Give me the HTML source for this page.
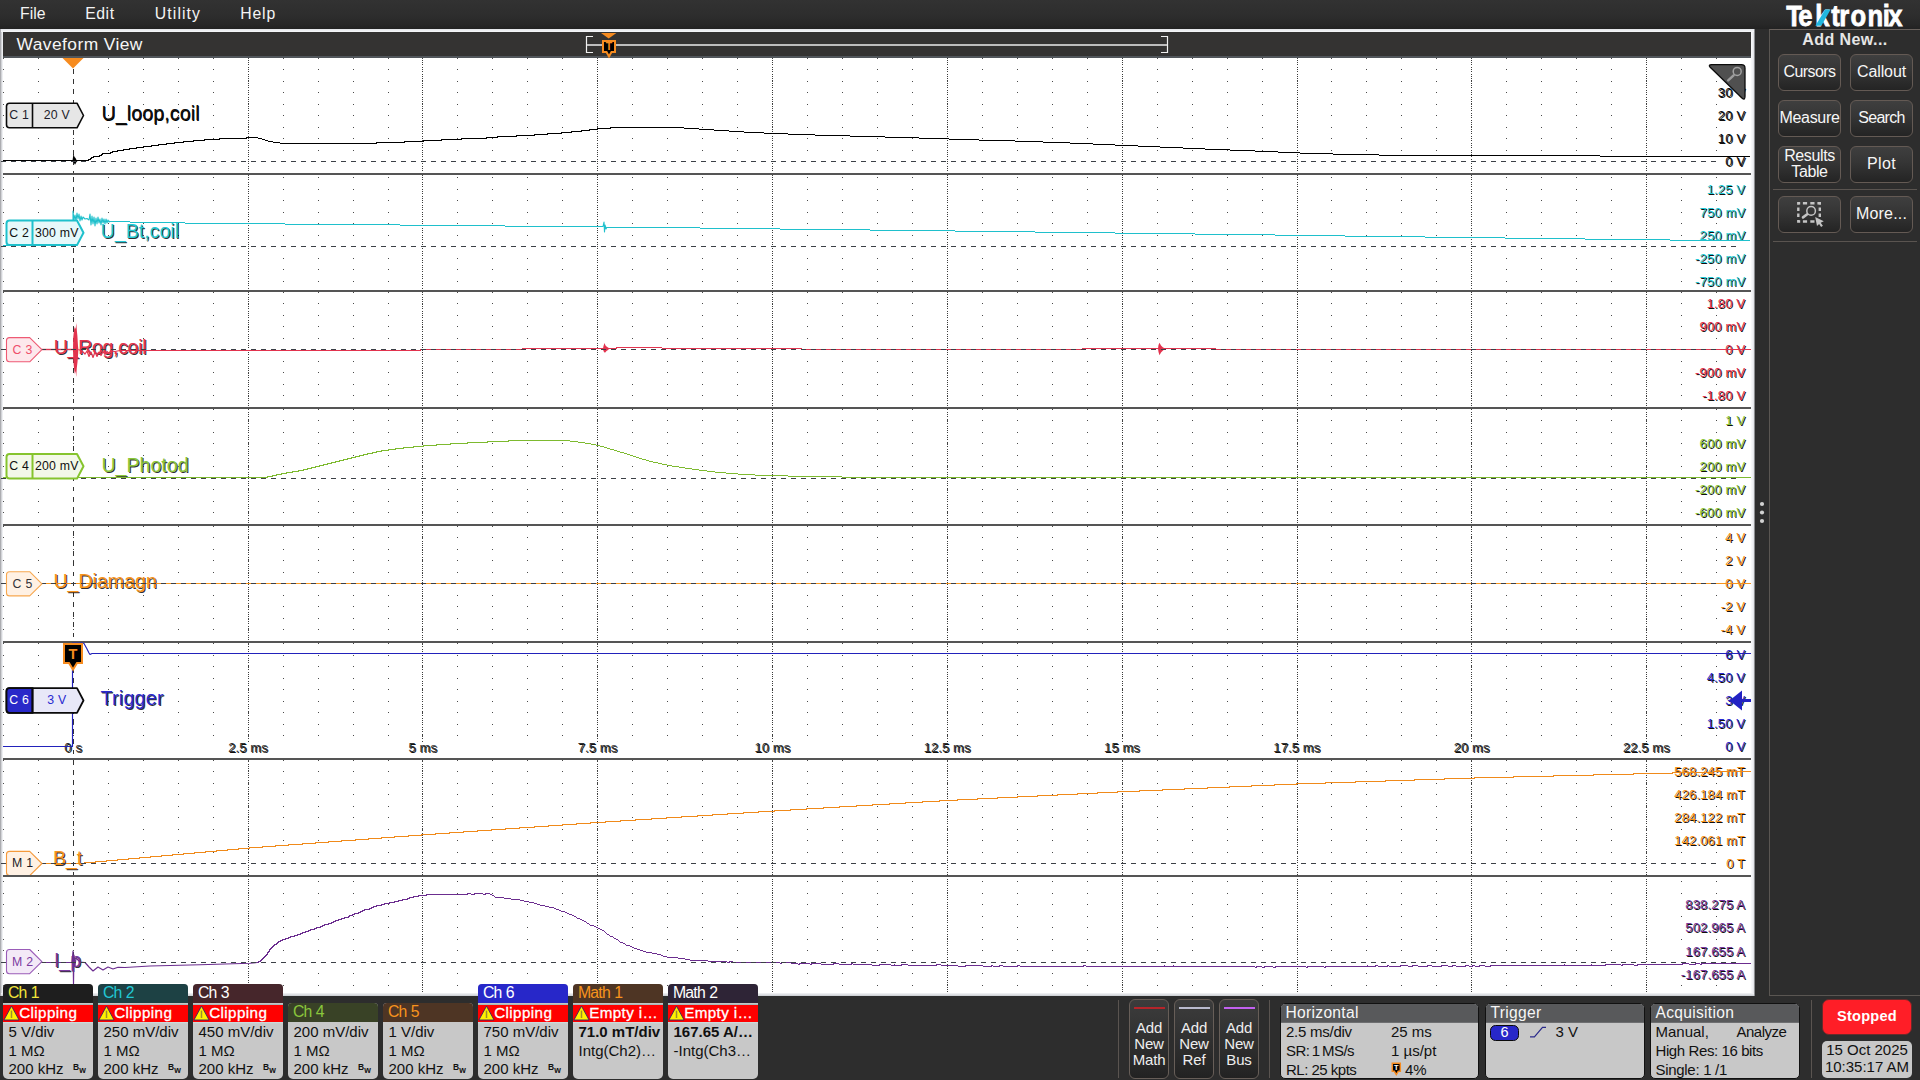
<!DOCTYPE html>
<html lang="en">
<head>
<meta charset="utf-8">
<title>Waveform View</title>
<style>
html,body{margin:0;padding:0}
body{width:1920px;height:1080px;overflow:hidden;background:#2d2d2d;position:relative;font-family:"Liberation Sans",sans-serif;color:#f2f2f2}
.abs,.abs *{position:absolute}
.t{position:absolute;white-space:nowrap;line-height:1}
/* menu bar */
#menubar{position:absolute;left:0;top:0;width:1920px;height:29px;background:linear-gradient(#323232 0,#2d2d2d 55%,#272727 85%,#222 100%)}
#menubar .t{font-size:15.8px;top:6px;color:#f4f4f4}
/* waveform view frame */
#wvframe{position:absolute;left:0;top:29px;width:1755px;height:967px;background:linear-gradient(90deg,#9a9a9e 0,#e4e6ea 2px,#f6f7f9 3px,#f6f7f9 1752px,#dfe1e6 1754px,#3a3a3a 1755px)}
#wvtop{position:absolute;left:1px;top:29px;width:1753px;height:3px;background:linear-gradient(#e2e4e8,#f7f8fa)}
#wvbot{position:absolute;left:1px;top:993px;width:1753px;height:3px;background:linear-gradient(#f4f5f7,#c9ccd1)}
#titlebar{position:absolute;left:3px;top:32px;width:1748px;height:24px;background:#343332;border-bottom:2px solid #51565b}
#titlebar .t{left:13.6px;top:4.2px;font-size:17.4px;color:#f6f6f6;letter-spacing:.42px}
#plot{position:absolute;left:3px;top:58px;width:1748px;height:935px;background:#fff}
.wsvg{position:absolute;left:0;top:0}
/* plot labels */
.sl{right:174.8px;font-size:13px;text-shadow:1px 1px 0 #101010;letter-spacing:.15px;background:#fff;padding-left:6px}
.k-c1{color:#111111}.k-c2{color:#22c8d4}.k-c3{color:#e4344f}.k-c4{color:#8ac63c}.k-c5{color:#f7941d}.k-c6{color:#2a2ad0}.k-m1{color:#f7941d}.k-m2{color:#7b3aa0}
.tl{top:741.3px;font-size:13px;color:#333;transform:translateX(-50%);text-shadow:1px 1px 0 #101010;letter-spacing:.1px;background:linear-gradient(transparent 2px,#fff 2px);padding:0 2px 4px}
.tl0{background:none}
/* side panel */
#side{position:absolute;left:1769px;top:29px;width:151px;height:967px;box-sizing:border-box;border:1px solid #5a5652;border-right:none;border-top-color:#6a625d}
.sbtn{position:absolute;width:63px;height:37px;box-sizing:border-box;border:1px solid #645a54;border-radius:6px;background:linear-gradient(#3f3f3f 0,#353535 45%,#2a2a2a 80%,#242424 100%);color:#f6f6f6;font-size:16px;text-align:center;line-height:34.2px;white-space:nowrap}
.sbtn.two{line-height:16.2px;padding-top:1.2px;letter-spacing:-.4px}
.ssep{position:absolute;left:1773px;width:144px;height:1px;background:#5a5450}
#addnew{font-weight:bold;font-size:16px;color:#e6e6e6;left:1802.3px;top:31.5px;letter-spacing:.42px}
/* bottom badges */
.bd{position:absolute;width:90px;border-radius:4px 4px 5px 5px;overflow:hidden;background:#c8c8c8}
.bd .h{position:absolute;left:0;top:0;width:90px;height:19px}
.bd .h span{position:absolute;left:5.5px;top:1.4px;font-size:15.8px;line-height:1;white-space:nowrap;letter-spacing:-.75px;word-spacing:.6px;left:4.9px}
.bd .w{position:absolute;left:0;top:21px;width:90px;height:17px;background:#ff0000;color:#fff;box-shadow:0 -1.2px 0 #a9baba,0 1.2px 0 #cbdada}
.bd .w b{position:absolute;left:16.2px;top:.1px;font-size:15.2px;line-height:1;font-weight:normal;white-space:nowrap;letter-spacing:.4px;-webkit-text-stroke:.3px #fff}
.bd p{position:absolute;left:5.5px;margin:0;font-size:15px;line-height:1;color:#111;white-space:nowrap}
.bd.clip{top:984px;height:94.5px}
.bd.norm{top:1003px;height:75.5px}
.bd .bw{position:absolute;font-size:8.5px;font-weight:bold;color:#111;left:70px;line-height:1}
/* bottom right */
.nb{position:absolute;top:999px;width:40px;height:80px;box-sizing:border-box;border:1px solid #675e58;border-radius:6px;background:linear-gradient(#3c3c3c 0,#333 40%,#272727 85%,#222 100%);color:#eeeeee;font-size:15px;line-height:16px;text-align:center;padding-top:19.7px;letter-spacing:-.15px}
.nb i{position:absolute;left:3.6px;top:7px;width:31.6px;height:2px}
.vsep{position:absolute;top:1000px;width:1px;height:78px;background:#5a5450}
.ib{position:absolute;top:1003px;height:76px;box-sizing:border-box;border:1px solid #111;border-radius:5px;background:#c8c8c8;overflow:hidden}
.ib .h{position:absolute;left:0;top:0;right:0;height:18px;background:#58595b;border-bottom:1px solid #6e6f71}
.ib .h span{position:absolute;left:4.5px;top:1.2px;font-size:15.6px;line-height:1;color:#f6f6f6;white-space:nowrap;letter-spacing:.3px}
.ib p{position:absolute;margin:0;font-size:15px;line-height:1;color:#111;white-space:nowrap}
</style>
</head>
<body>
<!-- ======= top menu bar ======= -->
<div id="menubar">
  <span class="t" style="left:20px">File</span>
  <span class="t" style="left:85.2px;letter-spacing:.55px">Edit</span>
  <span class="t" style="left:154.8px;letter-spacing:1.1px">Utility</span>
  <span class="t" style="left:240.3px;letter-spacing:.8px">Help</span>
</div>

<!-- ======= waveform view ======= -->
<div id="wvframe"></div><div id="wvtop"></div><div id="wvbot"></div>
<div id="titlebar"><span class="t">Waveform View</span></div>
<div id="plot"></div>
<svg id="gridsvg" class="wsvg" width="1920" height="1080" viewBox="0 0 1920 1080">
<defs><path id="dr" d="M3 0h1m34 0h1m34 0h1m34 0h1m34 0h1m34 0h1m34 0h1m34 0h1m34 0h1m34 0h1m34 0h1m34 0h1m33 0h1m34 0h1m34 0h1m34 0h1m34 0h1m34 0h1m34 0h1m34 0h1m34 0h1m34 0h1m34 0h1m34 0h1m34 0h1m34 0h1m34 0h1m34 0h1m34 0h1m34 0h1m34 0h1m34 0h1m34 0h1m34 0h1m34 0h1m34 0h1m34 0h1m34 0h1m33 0h1m34 0h1m34 0h1m34 0h1m34 0h1m34 0h1m34 0h1m34 0h1m34 0h1m34 0h1m34 0h1m34 0h1" stroke="#4a4a4a" stroke-width="1" fill="none" shape-rendering="crispEdges"/>
<path id="vd" d="M0 58v1m0 1v1m0 1v1m0 1v1m0 2v1m0 1v1m0 1v1m0 2v1m0 1v1m0 1v1m0 1v1m0 2v1m0 1v1m0 1v1m0 2v1m0 1v1m0 1v1m0 2v1m0 1v1m0 1v1m0 1v1m0 2v1m0 1v1m0 1v1m0 2v1m0 1v1m0 1v1m0 2v1m0 1v1m0 1v1m0 1v1m0 2v1m0 1v1m0 1v1m0 2v1m0 1v1m0 1v1m0 2v1m0 1v1m0 1v1m0 2v1m0 1v1m0 1v1m0 1v1m0 2v1m0 1v1m0 1v1m0 2v1m0 1v1m0 1v1m0 2v1m0 1v1m0 1v1m0 1v1m0 2v1m0 1v1m0 1v1m0 2v1m0 1v1m0 1v1m0 2v1m0 1v1m0 1v1m0 1v1m0 2v1m0 1v1m0 1v1m0 2v1m0 1v1m0 1v1m0 2v1m0 1v1m0 1v1m0 1v1m0 2v1m0 1v1m0 1v1m0 2v1m0 1v1m0 1v1m0 2v1m0 1v1m0 1v1m0 1v1m0 2v1m0 1v1m0 1v1m0 2v1m0 1v1m0 1v1m0 2v1m0 1v1m0 1v1m0 1v1m0 2v1m0 1v1m0 1v1m0 2v1m0 1v1m0 1v1m0 2v1m0 1v1m0 1v1m0 1v1m0 2v1m0 1v1m0 1v1m0 2v1m0 1v1m0 1v1m0 2v1m0 1v1m0 1v1m0 1v1m0 2v1m0 1v1m0 1v1m0 2v1m0 1v1m0 1v1m0 2v1m0 1v1m0 1v1m0 1v1m0 2v1m0 1v1m0 1v1m0 2v1m0 1v1m0 1v1m0 2v1m0 1v1m0 1v1m0 1v1m0 2v1m0 1v1m0 1v1m0 2v1m0 1v1m0 1v1m0 2v1m0 1v1m0 1v1m0 1v1m0 2v1m0 1v1m0 1v1m0 2v1m0 1v1m0 1v1m0 2v1m0 1v1m0 1v1m0 1v1m0 2v1m0 1v1m0 1v1m0 2v1m0 1v1m0 1v1m0 2v1m0 1v1m0 1v1m0 1v1m0 2v1m0 1v1m0 1v1m0 2v1m0 1v1m0 1v1m0 2v1m0 1v1m0 1v1m0 1v1m0 2v1m0 1v1m0 1v1m0 2v1m0 1v1m0 1v1m0 2v1m0 1v1m0 1v1m0 1v1m0 2v1m0 1v1m0 1v1m0 2v1m0 1v1m0 1v1m0 2v1m0 1v1m0 1v1m0 1v1m0 2v1m0 1v1m0 1v1m0 2v1m0 1v1m0 1v1m0 2v1m0 1v1m0 1v1m0 1v1m0 2v1m0 1v1m0 1v1m0 2v1m0 1v1m0 1v1m0 2v1m0 1v1m0 1v1m0 1v1m0 2v1m0 1v1m0 1v1m0 2v1m0 1v1m0 1v1m0 2v1m0 1v1m0 1v1m0 1v1m0 2v1m0 1v1m0 1v1m0 2v1m0 1v1m0 1v1m0 2v1m0 1v1m0 1v1m0 1v1m0 2v1m0 1v1m0 1v1m0 2v1m0 1v1m0 1v1m0 1v1m0 2v1m0 1v1m0 1v1m0 2v1m0 1v1m0 1v1m0 2v1m0 1v1m0 1v1m0 1v1m0 2v1m0 1v1m0 1v1m0 2v1m0 1v1m0 1v1m0 2v1m0 1v1m0 1v1m0 1v1m0 2v1m0 1v1m0 1v1m0 2v1m0 1v1m0 1v1m0 2v1m0 1v1m0 1v1m0 1v1m0 2v1m0 1v1m0 1v1m0 2v1m0 1v1m0 1v1m0 2v1m0 1v1m0 1v1m0 1v1m0 2v1m0 1v1m0 1v1m0 2v1m0 1v1m0 1v1m0 2v1m0 1v1m0 1v1m0 1v1m0 2v1m0 1v1m0 1v1m0 2v1m0 1v1m0 1v1m0 2v1m0 1v1m0 1v1m0 1v1m0 2v1m0 1v1m0 1v1m0 2v1m0 1v1m0 1v1m0 2v1m0 1v1m0 1v1m0 1v1m0 2v1m0 1v1m0 1v1m0 2v1m0 1v1m0 1v1m0 2v1m0 1v1m0 1v1m0 1v1m0 2v1m0 1v1m0 1v1m0 2v1m0 1v1m0 1v1m0 2v1m0 1v1m0 1v1m0 1v1m0 2v1m0 1v1m0 1v1m0 2v1m0 1v1m0 1v1m0 2v1m0 1v1m0 1v1m0 1v1m0 2v1m0 1v1m0 1v1m0 2v1m0 1v1m0 1v1m0 2v1m0 1v1m0 1v1m0 1v1m0 2v1m0 1v1m0 1v1m0 2v1m0 1v1m0 1v1m0 2v1m0 1v1m0 1v1m0 1v1m0 2v1m0 1v1m0 1v1m0 2v1m0 1v1m0 1v1m0 2v1m0 1v1m0 1v1m0 1v1m0 2v1m0 1v1m0 1v1m0 2v1m0 1v1m0 1v1m0 2v1m0 1v1m0 1v1m0 1v1m0 2v1m0 1v1m0 1v1m0 2v1m0 1v1m0 1v1m0 2v1m0 1v1m0 1v1m0 1v1m0 2v1m0 1v1m0 1v1m0 2v1m0 1v1m0 1v1m0 2v1m0 1v1m0 1v1m0 1v1m0 2v1m0 1v1m0 1v1m0 2v1m0 1v1m0 1v1" stroke="#3c3c3c" stroke-width="1" fill="none" shape-rendering="crispEdges"/></defs>
<g id="grid">
<use href="#dr" y="58.5"/>
<use href="#dr" y="69.5"/>
<use href="#dr" y="81.5"/>
<use href="#dr" y="92.5"/>
<use href="#dr" y="104.5"/>
<use href="#dr" y="115.5"/>
<use href="#dr" y="127.5"/>
<use href="#dr" y="138.5"/>
<use href="#dr" y="150.5"/>
<use href="#dr" y="177.5"/>
<use href="#dr" y="189.5"/>
<use href="#dr" y="200.5"/>
<use href="#dr" y="212.5"/>
<use href="#dr" y="223.5"/>
<use href="#dr" y="235.5"/>
<use href="#dr" y="258.5"/>
<use href="#dr" y="269.5"/>
<use href="#dr" y="281.5"/>
<use href="#dr" y="292.5"/>
<use href="#dr" y="303.5"/>
<use href="#dr" y="315.5"/>
<use href="#dr" y="326.5"/>
<use href="#dr" y="338.5"/>
<use href="#dr" y="361.5"/>
<use href="#dr" y="372.5"/>
<use href="#dr" y="384.5"/>
<use href="#dr" y="395.5"/>
<use href="#dr" y="409.5"/>
<use href="#dr" y="420.5"/>
<use href="#dr" y="432.5"/>
<use href="#dr" y="443.5"/>
<use href="#dr" y="455.5"/>
<use href="#dr" y="466.5"/>
<use href="#dr" y="489.5"/>
<use href="#dr" y="501.5"/>
<use href="#dr" y="512.5"/>
<use href="#dr" y="526.5"/>
<use href="#dr" y="537.5"/>
<use href="#dr" y="549.5"/>
<use href="#dr" y="560.5"/>
<use href="#dr" y="572.5"/>
<use href="#dr" y="595.5"/>
<use href="#dr" y="606.5"/>
<use href="#dr" y="618.5"/>
<use href="#dr" y="629.5"/>
<use href="#dr" y="643.5"/>
<use href="#dr" y="655.5"/>
<use href="#dr" y="666.5"/>
<use href="#dr" y="678.5"/>
<use href="#dr" y="689.5"/>
<use href="#dr" y="701.5"/>
<use href="#dr" y="712.5"/>
<use href="#dr" y="724.5"/>
<use href="#dr" y="735.5"/>
<use href="#dr" y="760.5"/>
<use href="#dr" y="771.5"/>
<use href="#dr" y="783.5"/>
<use href="#dr" y="794.5"/>
<use href="#dr" y="806.5"/>
<use href="#dr" y="817.5"/>
<use href="#dr" y="829.5"/>
<use href="#dr" y="840.5"/>
<use href="#dr" y="852.5"/>
<use href="#dr" y="881.5"/>
<use href="#dr" y="893.5"/>
<use href="#dr" y="904.5"/>
<use href="#dr" y="916.5"/>
<use href="#dr" y="927.5"/>
<use href="#dr" y="939.5"/>
<use href="#dr" y="950.5"/>
<use href="#dr" y="973.5"/>
<use href="#dr" y="985.5"/>
<use href="#vd" x="248.5"/>
<use href="#vd" x="422.5"/>
<use href="#vd" x="597.5"/>
<use href="#vd" x="772.5"/>
<use href="#vd" x="947.5"/>
<use href="#vd" x="1122.5"/>
<use href="#vd" x="1297.5"/>
<use href="#vd" x="1471.5"/>
<use href="#vd" x="1646.5"/>
</g>
<line x1="73.5" y1="58.9" x2="73.5" y2="173" stroke="#333" stroke-width="1" stroke-dasharray="4.7 5.45" shape-rendering="crispEdges"/>
<line x1="73.5" y1="176.8" x2="73.5" y2="290" stroke="#333" stroke-width="1" stroke-dasharray="4.7 5.45" shape-rendering="crispEdges"/>
<line x1="73.5" y1="297.0" x2="73.5" y2="407" stroke="#333" stroke-width="1" stroke-dasharray="4.7 5.45" shape-rendering="crispEdges"/>
<line x1="73.5" y1="415.5" x2="73.5" y2="524" stroke="#333" stroke-width="1" stroke-dasharray="4.7 5.45" shape-rendering="crispEdges"/>
<line x1="73.5" y1="531.0" x2="73.5" y2="641" stroke="#333" stroke-width="1" stroke-dasharray="4.7 5.45" shape-rendering="crispEdges"/>
<line x1="73.5" y1="648.0" x2="73.5" y2="758" stroke="#333" stroke-width="1" stroke-dasharray="4.7 5.45" shape-rendering="crispEdges"/>
<line x1="73.5" y1="760.0" x2="73.5" y2="875" stroke="#333" stroke-width="1" stroke-dasharray="4.7 5.45" shape-rendering="crispEdges"/>
<line x1="73.5" y1="880.7" x2="73.5" y2="993" stroke="#333" stroke-width="1" stroke-dasharray="4.7 5.45" shape-rendering="crispEdges"/>
<rect x="3" y="173" width="1748" height="2" fill="#555"/>
<rect x="3" y="290" width="1748" height="2" fill="#555"/>
<rect x="3" y="407" width="1748" height="2" fill="#555"/>
<rect x="3" y="524" width="1748" height="2" fill="#555"/>
<rect x="3" y="641" width="1748" height="2" fill="#555"/>
<rect x="3" y="758" width="1748" height="2" fill="#555"/>
<rect x="3" y="875" width="1748" height="2" fill="#555"/>

</svg>
<div id="scales">
<span class="t sl k-c1" style="top:86.1px">30 V</span>
<span class="t sl k-c1" style="top:109.1px">20 V</span>
<span class="t sl k-c1" style="top:132.1px">10 V</span>
<span class="t sl k-c1" style="top:155.1px">0 V</span>
<span class="t sl k-c2" style="top:182.6px">1.25 V</span>
<span class="t sl k-c2" style="top:205.6px">750 mV</span>
<span class="t sl k-c2" style="top:228.6px">250 mV</span>
<span class="t sl k-c2" style="top:251.6px">-250 mV</span>
<span class="t sl k-c2" style="top:274.6px">-750 mV</span>
<span class="t sl k-c3" style="top:296.9px">1.80 V</span>
<span class="t sl k-c3" style="top:319.9px">900 mV</span>
<span class="t sl k-c3" style="top:342.9px">0 V</span>
<span class="t sl k-c3" style="top:365.9px">-900 mV</span>
<span class="t sl k-c3" style="top:388.9px">-1.80 V</span>
<span class="t sl k-c4" style="top:413.6px">1 V</span>
<span class="t sl k-c4" style="top:436.6px">600 mV</span>
<span class="t sl k-c4" style="top:459.6px">200 mV</span>
<span class="t sl k-c4" style="top:482.6px">-200 mV</span>
<span class="t sl k-c4" style="top:505.6px">-600 mV</span>
<span class="t sl k-c5" style="top:530.6px">4 V</span>
<span class="t sl k-c5" style="top:553.6px">2 V</span>
<span class="t sl k-c5" style="top:576.6px">0 V</span>
<span class="t sl k-c5" style="top:599.6px">-2 V</span>
<span class="t sl k-c5" style="top:622.6px">-4 V</span>
<span class="t sl k-c6" style="top:648.1px">6 V</span>
<span class="t sl k-c6" style="top:671.1px">4.50 V</span>
<span class="t sl k-c6" style="top:694.1px">3 V</span>
<span class="t sl k-c6" style="top:717.1px">1.50 V</span>
<span class="t sl k-c6" style="top:740.1px">0 V</span>
<span class="t sl k-m1" style="top:765.1px">568.245 mT</span>
<span class="t sl k-m1" style="top:788.1px">426.184 mT</span>
<span class="t sl k-m1" style="top:811.1px">284.122 mT</span>
<span class="t sl k-m1" style="top:834.1px">142.061 mT</span>
<span class="t sl k-m1" style="top:857.1px">0 T</span>
<span class="t sl k-m2" style="top:898.3px">838.275 A</span>
<span class="t sl k-m2" style="top:921.1px">502.965 A</span>
<span class="t sl k-m2" style="top:945.1px">167.655 A</span>
<span class="t sl k-m2" style="top:968.1px">-167.655 A</span>
</div>
<div id="timeaxis">
<span class="t tl tl0" style="left:73.2px">0 s</span>
<span class="t tl" style="left:248.0px">2.5 ms</span>
<span class="t tl" style="left:422.8px">5 ms</span>
<span class="t tl" style="left:597.6px">7.5 ms</span>
<span class="t tl" style="left:772.4px">10 ms</span>
<span class="t tl" style="left:947.2px">12.5 ms</span>
<span class="t tl" style="left:1122.0px">15 ms</span>
<span class="t tl" style="left:1296.8px">17.5 ms</span>
<span class="t tl" style="left:1471.6px">20 ms</span>
<span class="t tl" style="left:1646.4px">22.5 ms</span>
</div>
<div id="chlabels">
<span class="t" style="left:101.4px;top:104.2px;font-size:19.6px;color:#111111;text-shadow:.6px .6px 0 #000;width:97px;letter-spacing:.12px;">U_loop,coil</span>
<span class="t" style="left:100.6px;top:221.5px;font-size:19.6px;color:#22c8d4;text-shadow:1px 1px 0 rgba(12,12,16,.85);width:76px;">U_Bt,coil</span>
<span class="t" style="left:53.8px;top:338.2px;font-size:19.6px;color:#e4344f;text-shadow:1px 1px 0 rgba(12,12,16,.85);width:91px;letter-spacing:-.35px;">U_Rog,coil</span>
<span class="t" style="left:101.4px;top:455.5px;font-size:19.6px;color:#8ac63c;text-shadow:1px 1px 0 rgba(12,12,16,.85);width:85.5px;">U_Photod</span>
<span class="t" style="left:53.4px;top:572.2px;font-size:19.6px;color:#f7941d;text-shadow:1px 1px 0 rgba(12,12,16,.85);width:101.5px;">U_Diamagn</span>
<span class="t" style="left:100.4px;top:689.2px;font-size:19.6px;color:#2a2ad0;text-shadow:1px 1px 0 rgba(12,12,16,.85);width:62.5px;letter-spacing:.3px;">Trigger</span>
<span class="t" style="left:52.9px;top:848.9px;font-size:19.6px;color:#f7941d;text-shadow:1px 1px 0 rgba(12,12,16,.85);width:27.5px;">B_t</span>
<span class="t" style="left:53.9px;top:950.7px;font-size:19.6px;color:#7b3aa0;text-shadow:1px 1px 0 rgba(12,12,16,.85);width:23px;">I_p</span>
</div>
<svg id="tracesvg" class="wsvg" width="1920" height="1080" viewBox="0 0 1920 1080">

<g id="traces">
<polyline points="3.0,160.5 88.0,160.5 88.0,159.5 90.0,159.5 90.0,158.5 91.0,158.5 91.0,157.5 93.0,157.5 93.0,156.5 99.0,156.5 99.0,155.5 101.0,155.5 101.0,154.5 102.0,154.5 102.0,153.5 110.0,153.5 110.0,152.5 112.0,152.5 112.0,151.5 117.0,151.5 117.0,150.5 123.0,150.5 123.0,149.5 129.0,149.5 129.0,148.5 136.0,148.5 136.0,147.5 143.0,147.5 143.0,146.5 151.0,146.5 151.0,145.5 158.0,145.5 158.0,144.5 166.0,144.5 166.0,143.5 174.0,143.5 174.0,142.5 183.0,142.5 183.0,141.5 193.0,141.5 193.0,140.5 204.0,140.5 204.0,139.5 219.0,139.5 219.0,138.5 246.0,138.5 246.0,137.5 258.0,137.5 258.0,138.5 262.0,138.5 262.0,139.5 265.0,139.5 265.0,140.5 268.0,140.5 268.0,141.5 273.0,141.5 273.0,142.5 280.0,142.5 280.0,143.5 376.0,143.5 376.0,142.5 404.0,142.5 404.0,141.5 423.0,141.5 423.0,140.5 441.0,140.5 441.0,139.5 461.0,139.5 461.0,138.5 486.0,138.5 486.0,137.5 497.0,137.5 497.0,136.5 516.0,136.5 516.0,135.5 534.0,135.5 534.0,134.5 547.0,134.5 547.0,133.5 561.0,133.5 561.0,132.5 571.0,132.5 571.0,131.5 581.0,131.5 581.0,130.5 589.0,130.5 589.0,129.5 597.0,129.5 597.0,128.5 610.0,128.5 610.0,127.5 684.0,127.5 684.0,128.5 699.0,128.5 699.0,129.5 714.0,129.5 714.0,130.5 729.0,130.5 729.0,131.5 744.0,131.5 744.0,132.5 764.0,132.5 764.0,133.5 788.0,133.5 788.0,134.5 815.0,134.5 815.0,135.5 850.0,135.5 850.0,136.5 885.0,136.5 885.0,137.5 919.0,137.5 919.0,138.5 949.0,138.5 949.0,139.5 979.0,139.5 979.0,140.5 1015.0,140.5 1015.0,141.5 1043.0,141.5 1043.0,142.5 1070.0,142.5 1070.0,143.5 1093.0,143.5 1093.0,144.5 1115.0,144.5 1115.0,145.5 1138.0,145.5 1138.0,146.5 1160.0,146.5 1160.0,147.5 1183.0,147.5 1183.0,148.5 1205.0,148.5 1205.0,149.5 1230.0,149.5 1230.0,150.5 1255.0,150.5 1255.0,151.5 1278.0,151.5 1278.0,152.5 1300.0,152.5 1300.0,153.5 1333.0,153.5 1333.0,154.5 1379.0,154.5 1379.0,155.5 1600.0,155.5 1600.0,156.5 1750.0,156.5" fill="none" stroke="#000000" stroke-width="1" stroke-linejoin="round" shape-rendering="crispEdges"/>
<polygon points="73.5,153.7 74.5,157 75.5,158 76.5,160 78,160.5 76.5,162 75,164.8 74,163 73,161.5 72.5,160.5" fill="#000"/>
<polyline points="3.0,245.5 73.0,245.5" fill="none" stroke="#1fc0cc" stroke-width="1" stroke-linejoin="round" shape-rendering="crispEdges"/>
<polyline points="73.0,246.0 73.0,211.0 74.0,220.0 75.0,215.0 76.0,221.0 77.0,213.0 78.0,219.0 79.0,214.0 80.0,221.0 81.0,216.0 82.0,220.0 83.0,217.0 85.0,219.0 87.0,218.5 89.0,220.0 90.0,214.0 91.0,225.0 92.0,216.0 93.0,224.0 94.0,217.0 95.0,226.0 96.0,218.0 97.0,224.0 98.0,217.0 99.0,223.0 100.0,219.0 101.0,225.0 102.0,218.0 103.0,223.0 104.0,219.0 105.0,224.0 106.0,219.0 107.0,223.0 108.0,220.0 109.0,222.0 110.0,221.0" fill="none" stroke="#1fc0cc" stroke-width="1.1" stroke-linejoin="round" />
<polyline points="110.0,221.5 130.0,221.5 130.0,222.5 185.0,222.5 185.0,223.5 285.0,223.5 285.0,224.5 400.0,224.5 400.0,225.5 505.0,225.5 505.0,226.5 603.0,226.5" fill="none" stroke="#1fc0cc" stroke-width="1" stroke-linejoin="round" shape-rendering="crispEdges"/>
<polyline points="603.0,226.7 604.0,222.0 604.5,232.0 605.0,225.0 606.0,229.0 607.0,227.0" fill="none" stroke="#1fc0cc" stroke-width="1.1" stroke-linejoin="round" />
<polyline points="607.0,227.5 700.0,227.5 700.0,228.5 780.0,228.5 780.0,229.5 870.0,229.5 870.0,230.5 955.0,230.5 955.0,231.5 1035.0,231.5 1035.0,232.5 1115.0,232.5 1115.0,233.5 1195.0,233.5 1195.0,234.5 1275.0,234.5 1275.0,235.5 1345.0,235.5 1345.0,236.5 1425.0,236.5 1425.0,237.5 1505.0,237.5 1505.0,238.5 1585.0,238.5 1585.0,239.5 1670.0,239.5 1670.0,240.5 1750.0,240.5" fill="none" stroke="#1fc0cc" stroke-width="1" stroke-linejoin="round" shape-rendering="crispEdges"/>
<polyline points="42.0,349.5 73.0,349.5" fill="none" stroke="#e2334e" stroke-width="1.4" stroke-linejoin="round" />
<polygon points="73.0,349.5 73.2,338.0 74.0,330.0 74.8,327.0 75.6,329.0 76.3,323.0 76.9,331.0 77.4,336.0 78.0,346.0 78.4,349.5 78.0,356.0 77.5,362.0 76.8,368.0 76.2,377.0 75.6,371.0 74.8,374.0 74.0,368.0 73.3,360.0" fill="#e2334e"/>
<polyline points="78.4,349.5 82.0,351.0 85.0,354.0 87.0,351.0 89.0,356.5 91.0,352.0 93.0,357.5 95.0,352.0 97.0,356.5 99.0,352.0 101.0,355.5 103.0,351.5 105.0,354.5 107.0,351.5 109.0,353.5 111.0,351.0 115.0,351.5 120.0,350.5" fill="none" stroke="#e2334e" stroke-width="1.2" stroke-linejoin="round" />
<polyline points="120.0,350.5 420.0,350.5 420.0,349.5 522.0,349.5 522.0,348.5 616.0,348.5 616.0,347.5 662.0,347.5 662.0,348.5 802.0,348.5 802.0,349.5 1082.0,349.5 1082.0,348.5 1216.0,348.5 1216.0,349.5 1751.0,349.5" fill="none" stroke="#e2334e" stroke-width="1" stroke-linejoin="round" shape-rendering="crispEdges"/>
<polygon points="603.0,348.5 603.5,346.0 604.5,343.0 605.5,345.5 606.5,346.5 608.0,347.5 609.5,348.5 608.0,350.0 606.5,351.0 605.0,352.8 604.0,352.0 603.3,350.5" fill="#e2334e"/>
<polygon points="1158.0,348.5 1158.5,345.0 1159.5,342.8 1161.0,345.5 1163.0,347.5 1165.5,348.5 1163.0,350.5 1161.0,352.5 1159.5,355.3 1158.5,352.0" fill="#e2334e"/>
<polyline points="3.0,477.5 267.0,477.5 267.0,476.5 272.0,476.5 272.0,475.5 276.0,475.5 276.0,474.5 281.0,474.5 281.0,473.5 286.0,473.5 286.0,472.5 292.0,472.5 292.0,471.5 298.0,471.5 298.0,470.5 303.0,470.5 303.0,469.5 307.0,469.5 307.0,468.5 311.0,468.5 311.0,467.5 315.0,467.5 315.0,466.5 319.0,466.5 319.0,465.5 323.0,465.5 323.0,464.5 327.0,464.5 327.0,463.5 331.0,463.5 331.0,462.5 335.0,462.5 335.0,461.5 339.0,461.5 339.0,460.5 343.0,460.5 343.0,459.5 347.0,459.5 347.0,458.5 351.0,458.5 351.0,457.5 355.0,457.5 355.0,456.5 359.0,456.5 359.0,455.5 363.0,455.5 363.0,454.5 367.0,454.5 367.0,453.5 372.0,453.5 372.0,452.5 376.0,452.5 376.0,451.5 381.0,451.5 381.0,450.5 388.0,450.5 388.0,449.5 395.0,449.5 395.0,448.5 403.0,448.5 403.0,447.5 413.0,447.5 413.0,446.5 423.0,446.5 423.0,445.5 436.0,445.5 436.0,444.5 450.0,444.5 450.0,443.5 467.0,443.5 467.0,442.5 487.0,442.5 487.0,441.5 508.0,441.5 508.0,440.5 570.0,440.5 570.0,441.5 578.0,441.5 578.0,442.5 585.0,442.5 585.0,443.5 591.0,443.5 591.0,444.5 596.0,444.5 596.0,445.5 600.0,445.5 600.0,446.5 604.0,446.5 604.0,447.5 607.0,447.5 607.0,448.5 610.0,448.5 610.0,449.5 614.0,449.5 614.0,450.5 617.0,450.5 617.0,451.5 620.0,451.5 620.0,452.5 624.0,452.5 624.0,453.5 627.0,453.5 627.0,454.5 630.0,454.5 630.0,455.5 633.0,455.5 633.0,456.5 636.0,456.5 636.0,457.5 639.0,457.5 639.0,458.5 642.0,458.5 642.0,459.5 646.0,459.5 646.0,460.5 649.0,460.5 649.0,461.5 653.0,461.5 653.0,462.5 658.0,462.5 658.0,463.5 662.0,463.5 662.0,464.5 667.0,464.5 667.0,465.5 672.0,465.5 672.0,466.5 679.0,466.5 679.0,467.5 685.0,467.5 685.0,468.5 692.0,468.5 692.0,469.5 699.0,469.5 699.0,470.5 707.0,470.5 707.0,471.5 715.0,471.5 715.0,472.5 726.0,472.5 726.0,473.5 738.0,473.5 738.0,474.5 755.0,474.5 755.0,475.5 788.0,475.5 788.0,476.5 842.0,476.5 842.0,477.5 1751.0,477.5" fill="none" stroke="#7dba2f" stroke-width="1" stroke-linejoin="round" shape-rendering="crispEdges"/>
<polyline points="42.0,583.5 1751.0,583.5" fill="none" stroke="#f7941d" stroke-width="1" stroke-linejoin="round" shape-rendering="crispEdges"/>
<polyline points="3.0,746.5 72.5,746.5 72.5,643.0 83.0,643.0 84.0,643.5 87.0,649.0 89.0,653.0 90.0,654.5 92.0,653.5 1751.0,653.5" fill="none" stroke="#2222bb" stroke-width="1.15" stroke-linejoin="round" />
<polyline points="42.0,863.5 84.0,863.5 84.0,862.5 95.0,862.5 95.0,861.5 106.0,861.5 106.0,860.5 117.0,860.5 117.0,859.5 128.0,859.5 128.0,858.5 139.0,858.5 139.0,857.5 150.0,857.5 150.0,856.5 161.0,856.5 161.0,855.5 172.0,855.5 172.0,854.5 183.0,854.5 183.0,853.5 194.0,853.5 194.0,852.5 205.0,852.5 205.0,851.5 216.0,851.5 216.0,850.5 227.0,850.5 227.0,849.5 238.0,849.5 238.0,848.5 249.0,848.5 249.0,847.5 262.0,847.5 262.0,846.5 275.0,846.5 275.0,845.5 288.0,845.5 288.0,844.5 302.0,844.5 302.0,843.5 315.0,843.5 315.0,842.5 328.0,842.5 328.0,841.5 341.0,841.5 341.0,840.5 355.0,840.5 355.0,839.5 368.0,839.5 368.0,838.5 381.0,838.5 381.0,837.5 394.0,837.5 394.0,836.5 408.0,836.5 408.0,835.5 421.0,835.5 421.0,834.5 435.0,834.5 435.0,833.5 449.0,833.5 449.0,832.5 463.0,832.5 463.0,831.5 477.0,831.5 477.0,830.5 491.0,830.5 491.0,829.5 505.0,829.5 505.0,828.5 519.0,828.5 519.0,827.5 534.0,827.5 534.0,826.5 548.0,826.5 548.0,825.5 562.0,825.5 562.0,824.5 576.0,824.5 576.0,823.5 590.0,823.5 590.0,822.5 605.0,822.5 605.0,821.5 620.0,821.5 620.0,820.5 635.0,820.5 635.0,819.5 651.0,819.5 651.0,818.5 666.0,818.5 666.0,817.5 681.0,817.5 681.0,816.5 697.0,816.5 697.0,815.5 712.0,815.5 712.0,814.5 727.0,814.5 727.0,813.5 743.0,813.5 743.0,812.5 758.0,812.5 758.0,811.5 774.0,811.5 774.0,810.5 790.0,810.5 790.0,809.5 806.0,809.5 806.0,808.5 823.0,808.5 823.0,807.5 839.0,807.5 839.0,806.5 856.0,806.5 856.0,805.5 872.0,805.5 872.0,804.5 889.0,804.5 889.0,803.5 905.0,803.5 905.0,802.5 922.0,802.5 922.0,801.5 939.0,801.5 939.0,800.5 957.0,800.5 957.0,799.5 977.0,799.5 977.0,798.5 997.0,798.5 997.0,797.5 1017.0,797.5 1017.0,796.5 1037.0,796.5 1037.0,795.5 1057.0,795.5 1057.0,794.5 1077.0,794.5 1077.0,793.5 1097.0,793.5 1097.0,792.5 1117.0,792.5 1117.0,791.5 1139.0,791.5 1139.0,790.5 1162.0,790.5 1162.0,789.5 1184.0,789.5 1184.0,788.5 1207.0,788.5 1207.0,787.5 1229.0,787.5 1229.0,786.5 1251.0,786.5 1251.0,785.5 1274.0,785.5 1274.0,784.5 1296.0,784.5 1296.0,783.5 1325.0,783.5 1325.0,782.5 1355.0,782.5 1355.0,781.5 1385.0,781.5 1385.0,780.5 1414.0,780.5 1414.0,779.5 1444.0,779.5 1444.0,778.5 1474.0,778.5 1474.0,777.5 1513.0,777.5 1513.0,776.5 1553.0,776.5 1553.0,775.5 1593.0,775.5 1593.0,774.5 1633.0,774.5 1633.0,773.5 1672.0,773.5 1672.0,772.5 1712.0,772.5 1712.0,771.5 1751.0,771.5" fill="none" stroke="#f08a1a" stroke-width="1" stroke-linejoin="round" shape-rendering="crispEdges"/>
<polyline points="42.0,962.5 72.0,962.5 73.0,951.0 73.5,984.0 74.0,955.0 75.0,966.0 76.0,958.0 77.0,959.0 80.0,962.0 85.0,962.5 89.0,967.0 93.0,971.0 98.0,967.0 103.0,970.0 108.0,967.0 113.0,969.0 118.0,967.3 125.0,967.5 150.0,966.0 200.0,964.8 250.0,963.3 257.0,962.5" fill="none" stroke="#6b2d8f" stroke-width="1.15" stroke-linejoin="round" />
<polyline points="257.0,962.5 258.0,962.5 258.0,961.5 260.0,961.5 260.0,960.5 261.0,960.5 261.0,959.5 262.0,959.5 262.0,958.5 263.0,958.5 263.0,957.5 264.0,957.5 264.0,956.5 265.0,956.5 265.0,955.5 266.0,955.5 266.0,954.5 267.0,954.5 267.0,952.5 268.0,952.5 268.0,951.5 269.0,951.5 269.0,949.5 270.0,949.5 270.0,948.5 271.0,948.5 271.0,947.5 272.0,947.5 272.0,946.5 273.0,946.5 273.0,945.5 274.0,945.5 274.0,944.5 276.0,944.5 276.0,943.5 277.0,943.5 277.0,942.5 278.0,942.5 278.0,941.5 280.0,941.5 280.0,940.5 282.0,940.5 282.0,939.5 285.0,939.5 285.0,938.5 288.0,938.5 288.0,937.5 290.0,937.5 290.0,936.5 294.0,936.5 294.0,935.5 297.0,935.5 297.0,934.5 300.0,934.5 300.0,933.5 302.0,933.5 302.0,932.5 305.0,932.5 305.0,931.5 308.0,931.5 308.0,930.5 310.0,930.5 310.0,929.5 314.0,929.5 314.0,928.5 316.0,928.5 316.0,927.5 320.0,927.5 320.0,926.5 322.0,926.5 322.0,925.5 324.0,925.5 324.0,924.5 328.0,924.5 328.0,923.5 331.0,923.5 331.0,922.5 333.0,922.5 333.0,921.5 335.0,921.5 335.0,920.5 338.0,920.5 338.0,919.5 341.0,919.5 341.0,918.5 344.0,918.5 344.0,917.5 348.0,917.5 348.0,916.5 349.0,916.5 349.0,915.5 352.0,915.5 352.0,914.5 354.0,914.5 354.0,913.5 358.0,913.5 358.0,912.5 360.0,912.5 360.0,911.5 362.0,911.5 362.0,910.5 364.0,910.5 364.0,909.5 369.0,909.5 369.0,908.5 371.0,908.5 371.0,907.5 373.0,907.5 373.0,906.5 376.0,906.5 376.0,905.5 381.0,905.5 381.0,904.5 384.0,904.5 384.0,903.5 389.0,903.5 389.0,902.5 394.0,902.5 394.0,901.5 398.0,901.5 398.0,900.5 402.0,900.5 402.0,899.5 407.0,899.5 407.0,898.5 409.0,898.5 409.0,897.5 413.0,897.5 413.0,896.5 418.0,896.5 418.0,895.5 426.0,895.5 426.0,894.5 467.0,894.5 467.0,893.5 471.0,893.5 471.0,894.5 474.0,894.5 474.0,893.5 483.0,893.5 483.0,894.5 485.0,894.5 485.0,893.5 490.0,893.5 490.0,894.5 492.0,894.5 492.0,895.5 494.0,895.5 494.0,896.5 495.0,896.5 495.0,897.5 504.0,897.5 504.0,898.5 511.0,898.5 511.0,899.5 520.0,899.5 520.0,900.5 524.0,900.5 524.0,901.5 529.0,901.5 529.0,902.5 534.0,902.5 534.0,903.5 537.0,903.5 537.0,904.5 540.0,904.5 540.0,905.5 545.0,905.5 545.0,906.5 549.0,906.5 549.0,907.5 554.0,907.5 554.0,908.5 556.0,908.5 556.0,909.5 559.0,909.5 559.0,910.5 561.0,910.5 561.0,911.5 565.0,911.5 565.0,912.5 567.0,912.5 567.0,913.5 569.0,913.5 569.0,914.5 572.0,914.5 572.0,915.5 574.0,915.5 574.0,916.5 576.0,916.5 576.0,917.5 577.0,917.5 577.0,918.5 580.0,918.5 580.0,919.5 582.0,919.5 582.0,920.5 584.0,920.5 584.0,921.5 586.0,921.5 586.0,922.5 587.0,922.5 587.0,923.5 589.0,923.5 589.0,924.5 590.0,924.5 590.0,925.5 594.0,925.5 594.0,926.5 596.0,926.5 596.0,927.5 598.0,927.5 598.0,928.5 600.0,928.5 600.0,929.5 602.0,929.5 602.0,930.5 604.0,930.5 604.0,931.5 605.0,931.5 605.0,932.5 606.0,932.5 606.0,933.5 607.0,933.5 607.0,934.5 609.0,934.5 609.0,935.5 610.0,935.5 610.0,936.5 613.0,936.5 613.0,937.5 614.0,937.5 614.0,938.5 616.0,938.5 616.0,939.5 618.0,939.5 618.0,940.5 619.0,940.5 619.0,941.5 620.0,941.5 620.0,942.5 623.0,942.5 623.0,943.5 625.0,943.5 625.0,944.5 626.0,944.5 626.0,945.5 630.0,945.5 630.0,946.5 632.0,946.5 632.0,947.5 634.0,947.5 634.0,948.5 637.0,948.5 637.0,949.5 640.0,949.5 640.0,950.5 643.0,950.5 643.0,951.5 646.0,951.5 646.0,952.5 652.0,952.5 652.0,953.5 657.0,953.5 657.0,954.5 661.0,954.5 661.0,955.5 663.0,955.5 663.0,956.5 667.0,956.5 667.0,957.5 678.0,957.5 678.0,958.5 685.0,958.5 685.0,959.5 690.0,959.5 690.0,960.5 708.0,960.5 708.0,961.5 727.0,961.5 727.0,962.5 729.0,962.5 729.0,961.5 733.0,961.5 733.0,962.5 780.0,962.5 780.0,963.5 781.0,963.5 781.0,962.5 791.0,962.5 791.0,963.5 795.0,963.5 795.0,962.5 796.0,962.5 796.0,963.5 798.0,963.5 798.0,964.5 799.0,964.5 799.0,963.5 810.0,963.5 810.0,964.5 811.0,964.5 811.0,963.5 821.0,963.5 821.0,964.5 833.0,964.5 833.0,963.5 839.0,963.5 839.0,964.5 851.0,964.5 851.0,963.5 853.0,963.5 853.0,964.5 872.0,964.5 872.0,965.5 879.0,965.5 879.0,964.5 891.0,964.5 891.0,965.5 894.0,965.5 894.0,964.5 895.0,964.5 895.0,965.5 901.0,965.5 901.0,964.5 908.0,964.5 908.0,965.5 936.0,965.5 936.0,964.5 941.0,964.5 941.0,965.5 958.0,965.5 958.0,966.5 965.0,966.5 965.0,965.5 983.0,965.5 983.0,966.5 991.0,966.5 991.0,965.5 993.0,965.5 993.0,966.5 999.0,966.5 999.0,965.5 1003.0,965.5 1003.0,966.5 1017.0,966.5 1017.0,965.5 1020.0,965.5 1020.0,966.5 1083.0,966.5 1083.0,965.5 1086.0,965.5 1086.0,966.5 1164.0,966.5 1164.0,965.5 1165.0,965.5 1165.0,966.5 1173.0,966.5 1173.0,965.5 1174.0,965.5 1174.0,966.5 1255.0,966.5 1255.0,967.5 1256.0,967.5 1256.0,966.5 1262.0,966.5 1262.0,967.5 1264.0,967.5 1264.0,966.5 1273.0,966.5 1273.0,967.5 1275.0,967.5 1275.0,966.5 1306.0,966.5 1306.0,967.5 1307.0,967.5 1307.0,966.5 1324.0,966.5 1324.0,967.5 1325.0,967.5 1325.0,966.5 1367.0,966.5 1367.0,965.5 1368.0,965.5 1368.0,966.5 1375.0,966.5 1375.0,965.5 1378.0,965.5 1378.0,966.5 1387.0,966.5 1387.0,965.5 1389.0,965.5 1389.0,966.5 1400.0,966.5 1400.0,965.5 1408.0,965.5 1408.0,966.5 1412.0,966.5 1412.0,965.5 1418.0,965.5 1418.0,966.5 1427.0,966.5 1427.0,965.5 1432.0,965.5 1432.0,966.5 1441.0,966.5 1441.0,965.5 1448.0,965.5 1448.0,966.5 1452.0,966.5 1452.0,965.5 1456.0,965.5 1456.0,966.5 1465.0,966.5 1465.0,965.5 1469.0,965.5 1469.0,966.5 1472.0,966.5 1472.0,965.5 1475.0,965.5 1475.0,966.5 1479.0,966.5 1479.0,965.5 1485.0,965.5 1485.0,966.5 1490.0,966.5 1490.0,965.5 1564.0,965.5 1564.0,964.5 1565.0,964.5 1565.0,965.5 1591.0,965.5 1591.0,964.5 1592.0,964.5 1592.0,965.5 1605.0,965.5 1605.0,964.5 1621.0,964.5 1621.0,965.5 1622.0,965.5 1622.0,964.5 1634.0,964.5 1634.0,965.5 1637.0,965.5 1637.0,964.5 1682.0,964.5 1682.0,963.5 1689.0,963.5 1689.0,964.5 1695.0,964.5 1695.0,963.5 1700.0,963.5 1700.0,964.5 1701.0,964.5 1701.0,963.5 1751.0,963.5" fill="none" stroke="#6b2d8f" stroke-width="1" stroke-linejoin="round" shape-rendering="crispEdges"/>
</g>
<line x1="1" y1="161.5" x2="1721" y2="161.5" stroke="#3b4046" stroke-width="1" stroke-dasharray="5 5" shape-rendering="crispEdges"/>
<line x1="1" y1="246.5" x2="1737" y2="246.5" stroke="#3b4046" stroke-width="1" stroke-dasharray="5 5" shape-rendering="crispEdges"/>
<line x1="1" y1="349.5" x2="1721" y2="349.5" stroke="#3b4046" stroke-width="1" stroke-dasharray="5 5" shape-rendering="crispEdges"/>
<line x1="1" y1="478.5" x2="1737" y2="478.5" stroke="#3b4046" stroke-width="1" stroke-dasharray="5 5" shape-rendering="crispEdges"/>
<line x1="1" y1="583.5" x2="1721" y2="583.5" stroke="#3b4046" stroke-width="1" stroke-dasharray="5 5" shape-rendering="crispEdges"/>
<line x1="1" y1="863.5" x2="1721" y2="863.5" stroke="#3b4046" stroke-width="1" stroke-dasharray="5 5" shape-rendering="crispEdges"/>
<line x1="1" y1="962.5" x2="1737" y2="962.5" stroke="#3b4046" stroke-width="1" stroke-dasharray="5 5" shape-rendering="crispEdges"/>
<path d="M9.5 103.2H77L83.5 115.5L77 127.8H9.5Q6.5 127.8 6.5 124.8V106.2Q6.5 103.2 9.5 103.2Z" fill="#e6e6e6" stroke="#0a0a0a" stroke-width="1.6" stroke-linejoin="round"/>
<line x1="32.5" y1="103.2" x2="32.5" y2="127.8" stroke="#0a0a0a" stroke-width="1.6"/>
<path d="M9.5 220.5H77L83.5 232.8L77 245.10000000000002H9.5Q6.5 245.10000000000002 6.5 242.10000000000002V223.5Q6.5 220.5 9.5 220.5Z" fill="#e6f8fa" stroke="#1fc0cc" stroke-width="2" stroke-linejoin="round"/>
<line x1="32.5" y1="220.5" x2="32.5" y2="245.10000000000002" stroke="#1fc0cc" stroke-width="2"/>
<path d="M9.5 337.59999999999997H29.7L41.9 349.7L29.7 361.8H9.5Q6.5 361.8 6.5 358.8V340.59999999999997Q6.5 337.59999999999997 9.5 337.59999999999997Z" fill="#fde8ec" stroke="#ee5a74" stroke-width="1.1" stroke-linejoin="round"/>
<path d="M9.5 454.0H77L83.5 466.3L77 478.6H9.5Q6.5 478.6 6.5 475.6V457.0Q6.5 454.0 9.5 454.0Z" fill="#f3f8e8" stroke="#86c42e" stroke-width="2" stroke-linejoin="round"/>
<line x1="32.5" y1="454.0" x2="32.5" y2="478.6" stroke="#86c42e" stroke-width="2"/>
<path d="M9.5 571.6999999999999H29.7L41.9 583.8L29.7 595.9H9.5Q6.5 595.9 6.5 592.9V574.6999999999999Q6.5 571.6999999999999 9.5 571.6999999999999Z" fill="#fff1e4" stroke="#f7a850" stroke-width="1.1" stroke-linejoin="round"/>
<path d="M9.5 688.2H77L83.5 700.5L77 712.8H9.5Q6.5 712.8 6.5 709.8V691.2Q6.5 688.2 9.5 688.2Z" fill="#e8e8f8" stroke="#0a0a0a" stroke-width="1.8" stroke-linejoin="round"/>
<path d="M9.5 688.2H32.5V712.8H9.5Q6.5 712.8 6.5 709.8V691.2Q6.5 688.2 9.5 688.2Z" fill="#2929c9" stroke="#0a0a0a" stroke-width="1.8"/>
<line x1="32.5" y1="688.2" x2="32.5" y2="712.8" stroke="#0a0a0a" stroke-width="1.8"/>
<path d="M9.5 851.4H29.7L41.9 863.5L29.7 875.6H9.5Q6.5 875.6 6.5 872.6V854.4Q6.5 851.4 9.5 851.4Z" fill="#fff1e4" stroke="#f59a3c" stroke-width="1.1" stroke-linejoin="round"/>
<rect x="3" y="875" width="60" height="2" fill="#555"/>
<path d="M9.5 949.5H29.7L41.9 961.6L29.7 973.7H9.5Q6.5 973.7 6.5 970.7V952.5Q6.5 949.5 9.5 949.5Z" fill="#f3e9f7" stroke="#9a5cb8" stroke-width="1.1" stroke-linejoin="round"/>
<path d="M62.5 58H83.5L73 68.5Z" fill="#f68b1f"/>
<path d="M64 644H82V663H77L73 669.5L69 663H64Z" fill="#000" stroke="#f68b1f" stroke-width="2"/>
<path d="M1729.5 700.5L1742 690.5V699H1751V702H1742V710.5Z" fill="#2222c4"/>
<path d="M1711.6 64.7H1741.4Q1745 64.7 1745 68.2V96.3Q1745 100.6 1742.2 98.2L1710.2 67.3Q1707.9 64.7 1711.6 64.7Z" fill="#505050" stroke="#0c0c0c" stroke-width="1.3" stroke-linejoin="round"/>
<circle cx="1737.2" cy="71.4" r="4" fill="none" stroke="#a2a2a2" stroke-width="1.5"/><path d="M1733.6 75.3L1728.2 80.3" stroke="#9c9c9c" stroke-width="2.5" stroke-linecap="round"/>
<path d="M593 36.5H586.5V52.5H593M1161 36.5H1167.5V52.5H1161" fill="none" stroke="#f0f0f0" stroke-width="1.2"/>
<rect x="587" y="44" width="580" height="2" fill="#bdbdbd"/>
<path d="M601 33H616.4L608.7 38.4Z" fill="#f68b1f"/>
<path d="M603 41H615V52H611.5L609 56.5L606.5 52H603Z" fill="#000" stroke="#f68b1f" stroke-width="2"/>
<circle cx="1762" cy="504" r="2.1" fill="#d2d2d2"/>
<circle cx="1762" cy="512.5" r="2.1" fill="#d2d2d2"/>
<circle cx="1762" cy="521" r="2.1" fill="#d2d2d2"/>
</svg>
<div id="chbadges">
<span class="t" style="left:19.2px;transform:translateX(-50%);top:109.4px;font-size:12.3px;color:#1c1c2a;letter-spacing:.25px;">C 1</span>
<span class="t" style="left:56.8px;transform:translateX(-50%);top:109.4px;font-size:12.3px;color:#1c1c2a;letter-spacing:.2px;">20 V</span>
<span class="t" style="left:19.2px;transform:translateX(-50%);top:226.7px;font-size:12.3px;color:#101010;letter-spacing:.25px;">C 2</span>
<span class="t" style="left:56.8px;transform:translateX(-50%);top:226.7px;font-size:12.3px;color:#101010;letter-spacing:.2px;">300 mV</span>
<span class="t" style="left:22.6px;transform:translateX(-50%);top:343.6px;font-size:12.3px;color:#ef4f6a;letter-spacing:.3px;">C 3</span>
<span class="t" style="left:19.2px;transform:translateX(-50%);top:460.2px;font-size:12.3px;color:#101010;letter-spacing:.25px;">C 4</span>
<span class="t" style="left:56.8px;transform:translateX(-50%);top:460.2px;font-size:12.3px;color:#101010;letter-spacing:.2px;">200 mV</span>
<span class="t" style="left:22.6px;transform:translateX(-50%);top:577.7px;font-size:12.3px;color:#333338;letter-spacing:.3px;">C 5</span>
<span class="t" style="left:19.2px;transform:translateX(-50%);top:694.4px;font-size:12.3px;color:#ffffff;letter-spacing:.25px;">C 6</span>
<span class="t" style="left:56.8px;transform:translateX(-50%);top:694.4px;font-size:12.3px;color:#2a2ad0;letter-spacing:.2px;">3 V</span>
<span class="t" style="left:22.6px;transform:translateX(-50%);top:857.4px;font-size:12.3px;color:#1c1c28;letter-spacing:.3px;">M 1</span>
<span class="t" style="left:22.6px;transform:translateX(-50%);top:955.5px;font-size:12.3px;color:#7b3aa0;letter-spacing:.3px;">M 2</span>
</div>
<span class="t" style="left:73.0px;transform:translateX(-50%);top:647.0px;font-size:14.5px;color:#f68b1f;font-weight:bold;">T</span>
<span class="t" style="left:609.0px;transform:translateX(-50%);top:40.7px;font-size:10.5px;color:#f68b1f;font-weight:bold;">T</span>

<!-- ======= right side panel ======= -->
<div id="side"></div>
<svg class="t" style="left:1780px;top:0" width="130" height="30" viewBox="0 0 130 30"><g transform="translate(0 25.7) scale(.86 1)" font-family="'Liberation Sans',sans-serif" font-weight="bold" font-size="29.8" fill="#ffffff" stroke="#ffffff" stroke-width=".8"><text x="7.2 21.2 41 59.6 69 82 101.8 119.4 126" y="0">Tektronix</text></g><path d="M35.4 25.7L45.2 9.5H50.6L41.4 25.7Z" fill="#20b7df"/><path d="M35.2 25.7L45 9.4" stroke="#2d2d2d" stroke-width="0"/></svg>
<span class="t" id="addnew">Add New...</span>
<div class="sbtn" style="left:1778px;top:54px;letter-spacing:-.55px">Cursors</div>
<div class="sbtn" style="left:1850px;top:54px;letter-spacing:-.1px">Callout</div>
<div class="sbtn" style="left:1778px;top:100px;letter-spacing:-.3px">Measure</div>
<div class="sbtn" style="left:1850px;top:100px;letter-spacing:-.7px">Search</div>
<div class="sbtn two" style="left:1778px;top:146px;">Results<br>Table</div>
<div class="sbtn" style="left:1850px;top:146px;letter-spacing:.3px">Plot</div>
<div class="sbtn" style="left:1778px;top:196px;"></div>
<div class="sbtn" style="left:1850px;top:196px;letter-spacing:.2px">More...</div>
<div class="ssep" style="top:189px"></div><div class="ssep" style="top:241px"></div>
<svg class="t" style="left:1778px;top:196px" width="63" height="37" viewBox="0 0 63 37"><path d="M19.1 7.2H22.2M24.9 7.2H29.1M32.3 7.2H36.5M39.4 7.2H43M19.1 25.5H22.2M24.9 25.5H29.1M32.3 25.5H36.5M20.3 5.9V8.7M20.3 11.4V14.9M20.3 17.4V20.9M20.3 24V26.8M41.8 5.9V8.7M41.8 11.4V14.9M41.8 17.4V20.9" stroke="#c4c4c4" stroke-width="2.4" fill="none"/><circle cx="33.1" cy="14.9" r="4.3" fill="none" stroke="#c4c4c4" stroke-width="1.5"/><path d="M29.2 18.3L25 21.4" stroke="#c4c4c4" stroke-width="2.6" stroke-linecap="round"/><path d="M37.2 20.9L45.8 25.3L42.7 26.8L44.9 29.7L43.1 30.9L41.1 28.1L39 30Z" fill="#c4c4c4"/></svg>

<!-- ======= bottom bar ======= -->
<div class="bd clip" style="left:3px"><div class="h" style="background:#1e1e1e"><span style="color:#f3e63a">Ch 1</span></div><div class="w"><svg style="position:absolute;left:-.1px;top:.3px" width="17" height="16" viewBox="0 0 17 16"><path d="M8.5 1.1L16.1 15H.9Z" fill="#fff200" stroke="#2e2466" stroke-width=".9" stroke-linejoin="round"/><rect x="7.75" y="5.6" width="1.5" height="7.4" fill="#9c8e2c"/></svg><b>Clipping</b></div>
<p style="top:39.7px">5 V/div</p>
<p style="top:58.6px">1 MΩ</p>
<p style="top:77.4px">200 kHz</p>
<span class="bw" style="top:79px">B<span style="position:relative;top:2.5px;font-size:8.5px">w</span></span>
</div>
<div class="bd clip" style="left:98px"><div class="h" style="background:#1d4144"><span style="color:#22c8d4">Ch 2</span></div><div class="w"><svg style="position:absolute;left:-.1px;top:.3px" width="17" height="16" viewBox="0 0 17 16"><path d="M8.5 1.1L16.1 15H.9Z" fill="#fff200" stroke="#2e2466" stroke-width=".9" stroke-linejoin="round"/><rect x="7.75" y="5.6" width="1.5" height="7.4" fill="#9c8e2c"/></svg><b>Clipping</b></div>
<p style="top:39.7px">250 mV/div</p>
<p style="top:58.6px">1 MΩ</p>
<p style="top:77.4px">200 kHz</p>
<span class="bw" style="top:79px">B<span style="position:relative;top:2.5px;font-size:8.5px">w</span></span>
</div>
<div class="bd clip" style="left:193px"><div class="h" style="background:#46262b"><span style="color:#ffffff">Ch 3</span></div><div class="w"><svg style="position:absolute;left:-.1px;top:.3px" width="17" height="16" viewBox="0 0 17 16"><path d="M8.5 1.1L16.1 15H.9Z" fill="#fff200" stroke="#2e2466" stroke-width=".9" stroke-linejoin="round"/><rect x="7.75" y="5.6" width="1.5" height="7.4" fill="#9c8e2c"/></svg><b>Clipping</b></div>
<p style="top:39.7px">450 mV/div</p>
<p style="top:58.6px">1 MΩ</p>
<p style="top:77.4px">200 kHz</p>
<span class="bw" style="top:79px">B<span style="position:relative;top:2.5px;font-size:8.5px">w</span></span>
</div>
<div class="bd norm" style="left:288px"><div class="h" style="background:#394226"><span style="color:#8ac63c">Ch 4</span></div>
<p style="top:20.7px">200 mV/div</p>
<p style="top:39.6px">1 MΩ</p>
<p style="top:58.4px">200 kHz</p>
<span class="bw" style="top:60px">B<span style="position:relative;top:2.5px;font-size:8.5px">w</span></span>
</div>
<div class="bd norm" style="left:383px"><div class="h" style="background:#4e3524"><span style="color:#f7941d">Ch 5</span></div>
<p style="top:20.7px">1 V/div</p>
<p style="top:39.6px">1 MΩ</p>
<p style="top:58.4px">200 kHz</p>
<span class="bw" style="top:60px">B<span style="position:relative;top:2.5px;font-size:8.5px">w</span></span>
</div>
<div class="bd clip" style="left:478px"><div class="h" style="background:#2727c9"><span style="color:#ffffff">Ch 6</span></div><div class="w"><svg style="position:absolute;left:-.1px;top:.3px" width="17" height="16" viewBox="0 0 17 16"><path d="M8.5 1.1L16.1 15H.9Z" fill="#fff200" stroke="#2e2466" stroke-width=".9" stroke-linejoin="round"/><rect x="7.75" y="5.6" width="1.5" height="7.4" fill="#9c8e2c"/></svg><b>Clipping</b></div>
<p style="top:39.7px">750 mV/div</p>
<p style="top:58.6px">1 MΩ</p>
<p style="top:77.4px">200 kHz</p>
<span class="bw" style="top:79px">B<span style="position:relative;top:2.5px;font-size:8.5px">w</span></span>
</div>
<div class="bd clip" style="left:573px"><div class="h" style="background:#4e3524"><span style="color:#f7941d">Math 1</span></div><div class="w"><svg style="position:absolute;left:-.1px;top:.3px" width="17" height="16" viewBox="0 0 17 16"><path d="M8.5 1.1L16.1 15H.9Z" fill="#fff200" stroke="#2e2466" stroke-width=".9" stroke-linejoin="round"/><rect x="7.75" y="5.6" width="1.5" height="7.4" fill="#9c8e2c"/></svg><b>Empty i…</b></div>
<p style="top:39.7px"><b style="font-weight:bold">71.0 mT/div</b></p>
<p style="top:58.6px">Intg(Ch2)…</p>
</div>
<div class="bd clip" style="left:668px"><div class="h" style="background:#2e2436"><span style="color:#ffffff">Math 2</span></div><div class="w"><svg style="position:absolute;left:-.1px;top:.3px" width="17" height="16" viewBox="0 0 17 16"><path d="M8.5 1.1L16.1 15H.9Z" fill="#fff200" stroke="#2e2466" stroke-width=".9" stroke-linejoin="round"/><rect x="7.75" y="5.6" width="1.5" height="7.4" fill="#9c8e2c"/></svg><b>Empty i…</b></div>
<p style="top:39.7px"><b style="font-weight:bold">167.65 A/…</b></p>
<p style="top:58.6px">-Intg(Ch3…</p>
</div>
<div class="vsep" style="left:1118px"></div>
<div class="nb" style="left:1129px"><i style="background:#b5242a"></i>Add<br>New<br>Math</div>
<div class="nb" style="left:1174px"><i style="background:#b9bace"></i>Add<br>New<br>Ref</div>
<div class="nb" style="left:1219px"><i style="background:#c261f0"></i>Add<br>New<br>Bus</div>
<div class="vsep" style="left:1269px"></div>
<div class="ib" style="left:1280px;width:199px"><div class="h"><span>Horizontal</span></div><p style="left:5px;top:20.4px;letter-spacing:-.25px">2.5 ms/div</p><p style="left:110px;top:20.4px">25 ms</p><p style="left:5px;top:39.1px;letter-spacing:-.6px;word-spacing:-1px">SR: 1 MS/s</p><p style="left:110px;top:39.1px">1 µs/pt</p><p style="left:5px;top:57.9px;letter-spacing:-.5px">RL: 25 kpts</p><p style="left:124px;top:57.9px">4%</p><svg style="position:absolute;left:109.6px;top:58.4px" width="12" height="16" viewBox="0 0 12 16"><path d="M1.3 1.3H9.3V9.2H7.3L5.3 12.6L3.3 9.2H1.3Z" fill="#000" stroke="#f68b1f" stroke-width="1.5"/><text x="5.3" y="8" font-family="'Liberation Sans',sans-serif" font-size="7.4" font-weight="bold" fill="#ffffff" text-anchor="middle">T</text></svg></div>
<div class="ib" style="left:1485px;width:160px"><div class="h"><span>Trigger</span></div><div style="position:absolute;left:4px;top:21px;width:29px;height:16px;box-sizing:border-box;border:1px solid #0a0a0a;border-radius:5.5px;background:#2727c9;color:#fff;font-size:14.5px;line-height:13.6px;text-align:center">6</div><svg style="position:absolute;left:42px;top:21px" width="20" height="16" viewBox="0 0 20 16"><path d="M2 11.9H6.4L14.5 2.4H18" fill="none" stroke="#2a2a8a" stroke-width="1.2"/></svg><p style="left:69.5px;top:20.4px">3 V</p></div>
<div class="ib" style="left:1650px;width:150px"><div class="h"><span>Acquisition</span></div><p style="left:4.5px;top:20.4px">Manual,</p><p style="left:85.5px;top:20.4px;letter-spacing:-.5px">Analyze</p><p style="left:4.5px;top:39.1px;letter-spacing:-.4px">High Res: 16 bits</p><p style="left:4.5px;top:57.9px;letter-spacing:-.3px">Single: 1 /1</p></div>
<div class="vsep" style="left:1811px"></div>
<div style="position:absolute;left:1822px;top:999px;width:90px;height:36px;box-sizing:border-box;border:1px solid #6a2a2a;border-radius:7px;background:#ff1e27;color:#fff;font-weight:bold;font-size:14.6px;line-height:33px;text-align:center;letter-spacing:.2px">Stopped</div>
<div style="position:absolute;left:1822px;top:1041px;width:90px;height:37px;border-radius:5px;background:#c8c8c8;color:#111;font-size:15px;line-height:17.4px;text-align:center;white-space:nowrap;padding-top:0px;box-sizing:border-box">15 Oct 2025<br>10:35:17 AM</div>
</body>
</html>
